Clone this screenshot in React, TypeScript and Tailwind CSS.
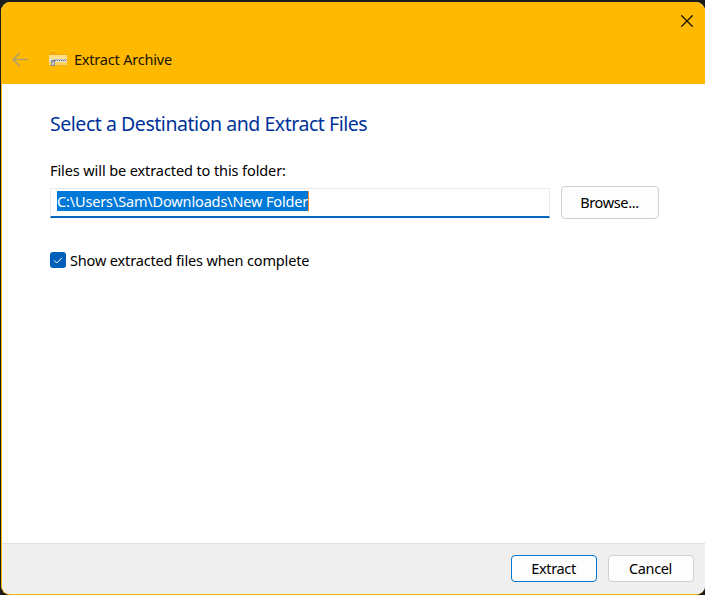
import React from 'react';

const BackIcon: React.FC = () => (
    <svg width="17" height="15" viewBox="0 0 17 15" fill="none" stroke="#b3a16c" strokeWidth="1.7">
        <path d="M16 7.5H1.2M7.7 1L1.2 7.5L7.7 14" />
    </svg>
);

const CloseIcon: React.FC = () => (
    <svg width="12" height="12" viewBox="0 0 12 12" fill="none" stroke="#191300" strokeWidth="1.3">
        <path d="M0.3 0.3L11.7 11.7M11.7 0.3L0.3 11.7" />
    </svg>
);

const ZipFolderIcon: React.FC = () => (
    <svg width="18" height="14" viewBox="0 0 18 14" shapeRendering="crispEdges">
        <path d="M0 0H6L8 2H18V4H0Z" fill="#f3ac0c" />
        <rect y="3" width="18" height="11" fill="#fbd35c" />
        <rect y="3" width="18" height="4" fill="#fde08a" />
        <rect y="13" width="18" height="1" fill="#e9b22c" />
        <rect y="7" width="18" height="3" fill="#e4e1d8" />
        <path d="M5 7.5H18" stroke="#9a9da3" strokeWidth="1" strokeDasharray="1 1" />
        <path d="M4 8.5H18" stroke="#56616f" strokeWidth="1" strokeDasharray="1 1" />
        <rect x="2" y="8" width="4" height="6" fill="#8b8d90" />
        <rect x="3" y="10" width="2" height="3" fill="#c9cacc" />
    </svg>
);

const CheckIcon: React.FC = () => (
    <svg width="16" height="16" viewBox="0 0 16 16" fill="none" stroke="#ffffff" strokeWidth="1">
        <path d="M4 8.3L6.7 11L12 5.7" />
    </svg>
);

type DialogButtonProps = {
    label: string;
    className: string;
};

const DialogButton: React.FC<DialogButtonProps> = ({ label, className }) => (
    <button className={`flex items-center justify-center rounded-[4px] border bg-[#fdfdfd] pb-0.5 pr-px tracking-[-0.35px] text-black ${className}`}>
        {label}
    </button>
);

const App: React.FC = () => {
    return (
        <div className="h-[595px] w-[705px] overflow-hidden bg-[#1c1c1c] pl-px pt-0.5 font-['Noto_Sans','Open_Sans',sans-serif] text-[14.5px] leading-5 tracking-[-0.15px] text-black">
            <div className="flex h-[593px] w-[704px] flex-col overflow-hidden rounded-[9px] border-b border-l border-[#ffb900] bg-white">
                <header className="flex h-[82px] shrink-0 flex-col bg-[#ffb900]">
                    <div className="flex h-[38px] items-center justify-end pr-3">
                        <CloseIcon />
                    </div>
                    <div className="flex h-[38px] items-center pl-2.5">
                        <BackIcon />
                        <span className="ml-5">
                            <ZipFolderIcon />
                        </span>
                        <h1 className="ml-[7px] tracking-[-0.2px] text-[#191300]">Extract Archive</h1>
                    </div>
                </header>

                <main className="flex-1 pl-12">
                    <h2 className="pt-[26px] text-[19.5px] leading-7 tracking-[-0.46px] text-[#003399]">
                        Select a Destination and Extract Files
                    </h2>
                    <p className="mt-[22px] tracking-[-0.1px]">Files will be extracted to this folder:</p>
                    <div className="mt-1.5 flex items-start">
                        <div className="mt-0.5 flex h-[30px] w-[500px] items-start border border-b-2 border-[#e9e9e9] border-b-[#0067c0] pl-1.5 pt-0.5">
                            <span className="h-5 border-r border-[#ff8728] bg-[#0078d7] text-white">
                                C:\Users\Sam\Downloads\New Folder
                            </span>
                        </div>
                        <DialogButton label="Browse..." className="ml-[11px] h-[33px] w-[98px] border-[#d0d0d0]" />
                    </div>
                    <label className="mt-[31px] flex items-center">
                        <span className="rounded-[3px] bg-[#005fb8]">
                            <CheckIcon />
                        </span>
                        <span className="ml-1">Show extracted files when complete</span>
                    </label>
                </main>

                <footer className="flex h-[51px] shrink-0 justify-end gap-[11px] border-t border-[#dfdfdf] bg-[#efefef] pr-[11px] pt-[11px]">
                    <DialogButton label="Extract" className="h-[27px] w-[86px] border-[#0078d4]" />
                    <DialogButton label="Cancel" className="h-[27px] w-[86px] border-[#d0d0d0]" />
                </footer>
            </div>
        </div>
    );
};

export default App;
